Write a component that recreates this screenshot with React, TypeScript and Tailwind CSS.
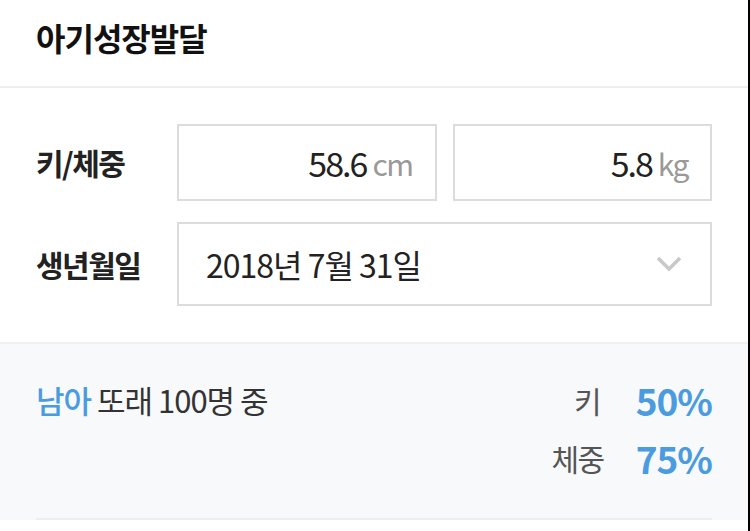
import React from "react";

const font = { fontFamily: '"Noto Sans CJK KR", "Noto Sans", sans-serif' };

function UnitInput({ value, unit }: { value: string; unit: string }) {
  return (
    <div className="flex h-[77px] flex-1 items-center justify-end border-2 border-[#dcdcdc] bg-white pr-[22px]">
      <span className="text-[34px] leading-none tracking-[-2px] text-[#222]">{value}</span>
      <span className="ml-[6px] text-[30px] leading-none tracking-[-1.5px] text-[#999]">{unit}</span>
    </div>
  );
}

export default function App() {
  return (
    <div className="min-h-[531px] w-[750px] overflow-hidden border-r-2 border-black bg-white" style={font}>
      <header className="flex h-[88px] items-start border-b-2 border-[#eeeeee] px-[36px] pt-[16px]">
        <h1 className="text-[32px] font-bold leading-[42px] tracking-[-1px] text-[#111]">아기성장발달</h1>
      </header>

      <section className="flex flex-col gap-[21px] border-b-2 border-[#eef0f2] px-[36px] pt-[36px] pb-[36px]">
        <div className="flex items-center">
          <span className="w-[141px] text-[30px] font-bold tracking-[-1.5px] text-[#222]">키/체중</span>
          <div className="flex flex-1 gap-[16px]">
            <UnitInput value="58.6" unit="cm" />
            <UnitInput value="5.8" unit="kg" />
          </div>
        </div>
        <div className="flex items-center">
          <span className="w-[141px] text-[30px] font-bold tracking-[-1.5px] text-[#222]">생년월일</span>
          <div className="flex h-[84px] flex-1 items-center justify-between border-2 border-[#dcdcdc] bg-white pl-[27px] pr-[28px]">
            <span className="text-[32px] tracking-[-1px] text-[#222]">2018년 7월 31일</span>
            <svg width="26" height="16" viewBox="0 0 26 16" fill="none">
              <path d="M2 2 L13 13 L24 2" stroke="#c8c8c8" strokeWidth="3.5" strokeLinejoin="miter" />
            </svg>
          </div>
        </div>
      </section>

      <section className="bg-[#f7f9fb] px-[36px] pt-[34px]">
        <div className="flex justify-between border-b-2 border-[#eceef0] pb-[38px]">
          <p className="text-[31px] leading-[44px] tracking-[-1px] text-[#333]">
            <span className="font-medium text-[#4a9be0]">남아</span> 또래 100명 중
          </p>
          <div className="flex flex-col items-end gap-[14px]">
            <div className="flex items-center">
              <span className="mr-[34px] text-[30px] leading-[44px] text-[#555]">키</span>
              <span className="text-[37px] font-bold leading-[44px] tracking-[-1px] text-[#4a9be0]">50%</span>
            </div>
            <div className="flex items-center">
              <span className="mr-[32px] text-[30px] leading-[44px] tracking-[-1.5px] text-[#555]">체중</span>
              <span className="text-[37px] font-bold leading-[44px] tracking-[-1px] text-[#4a9be0]">75%</span>
            </div>
          </div>
        </div>
      </section>
    </div>
  );
}
